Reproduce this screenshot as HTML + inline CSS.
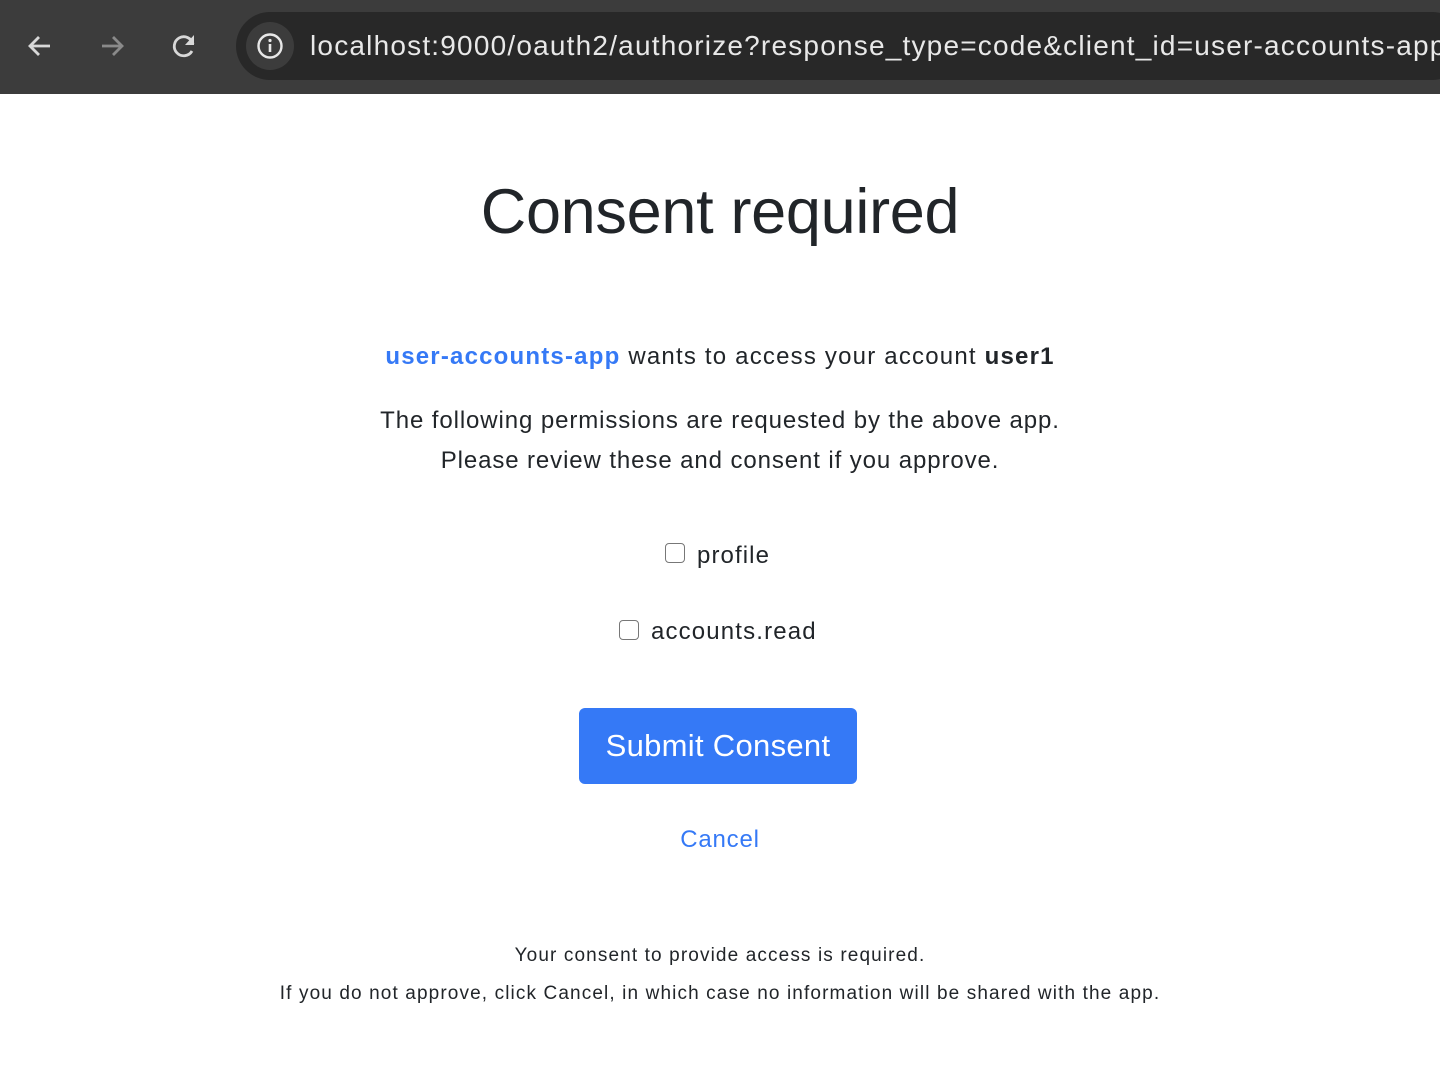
<!DOCTYPE html>
<html><head><meta charset="utf-8"><style>
*{margin:0;padding:0;box-sizing:border-box}
body{width:1440px;height:1078px;background:#fff;font-family:"Liberation Sans",Arial,sans-serif;color:#212529;position:relative;overflow:hidden}
.bar{position:absolute;left:0;top:0;width:1440px;height:94px;background:#3c3c3c}
.url{position:absolute;left:236px;top:12px;width:1230px;height:68px;border-radius:34px;background:#282828}
.info{position:absolute;left:246px;top:22px;width:48px;height:48px;border-radius:24px;background:#3c3c3c}
.urltext{position:absolute;left:310px;top:28px;font-size:28px;color:#e8e8e8;white-space:nowrap;line-height:36px;letter-spacing:1.2px}
.c{position:absolute;left:0;width:1440px;text-align:center;white-space:nowrap}
.cb{position:absolute;width:20px;height:20px;border:1.5px solid #777;border-radius:4px;background:#fff}
.btn{position:absolute;left:579px;top:708px;width:278px;height:76px;background:#3579f6;border-radius:6px;color:#fff;font-size:31px;text-align:center;line-height:76px;letter-spacing:0.3px}
</style></head><body>
<div class="bar">
<svg style="position:absolute;left:24px;top:30px" width="32" height="32" viewBox="0 0 32 32"><path d="M26 16H7M15 7l-9 9 9 9" stroke="#d8d8d8" stroke-width="2.8" fill="none"/></svg>
<svg style="position:absolute;left:96px;top:30px" width="32" height="32" viewBox="0 0 32 32"><path d="M6 16h19M17 7l9 9-9 9" stroke="#8a8a8a" stroke-width="2.8" fill="none"/></svg>
<svg style="position:absolute;left:168px;top:30px" width="32" height="32" viewBox="0 0 32 32"><path d="M25 14A9.5 9.5 0 1 0 24 21" stroke="#d8d8d8" stroke-width="2.8" fill="none"/><path d="M26 5v10h-9z" fill="#d8d8d8"/></svg>
<div class="url"></div>
<div class="info"></div>
<svg style="position:absolute;left:256px;top:32px" width="28" height="28" viewBox="0 0 28 28"><circle cx="14" cy="14" r="11.5" stroke="#e8e8e8" stroke-width="2.4" fill="none"/><path d="M14 12v8" stroke="#e8e8e8" stroke-width="2.6"/><circle cx="14" cy="8.5" r="1.6" fill="#e8e8e8"/></svg>
<div class="urltext">localhost:9000/oauth2/authorize?response_type=code&amp;client_id=user-accounts-app</div>
</div>
<div class="c" style="top:172px;font-size:63px;line-height:80px;font-weight:500;letter-spacing:-0.3px">Consent required</div>
<div class="c" style="top:341px;font-size:24px;line-height:32px;letter-spacing:1.2px"><b style="color:#3579f6">user-accounts-app</b> wants to access your account <b>user1</b></div>
<div class="c" style="top:401px;font-size:24px;line-height:40px;letter-spacing:0.9px">The following permissions are requested by the above app.<br>Please review these and consent if you approve.</div>
<div class="cb" style="left:665px;top:543px"></div>
<div style="position:absolute;left:697px;top:540px;font-size:24px;line-height:32px;letter-spacing:1.1px">profile</div>
<div class="cb" style="left:619px;top:620px"></div>
<div style="position:absolute;left:651px;top:616px;font-size:24px;line-height:32px;letter-spacing:1.15px">accounts.read</div>
<div class="btn">Submit Consent</div>
<div class="c" style="top:824px;font-size:24px;line-height:32px;color:#3579f6;letter-spacing:0.8px">Cancel</div>
<div class="c" style="top:937px;font-size:19px;line-height:38px;letter-spacing:1.12px">Your consent to provide access is required.<br>If you do not approve, click Cancel, in which case no information will be shared with the app.</div>
</body></html>
